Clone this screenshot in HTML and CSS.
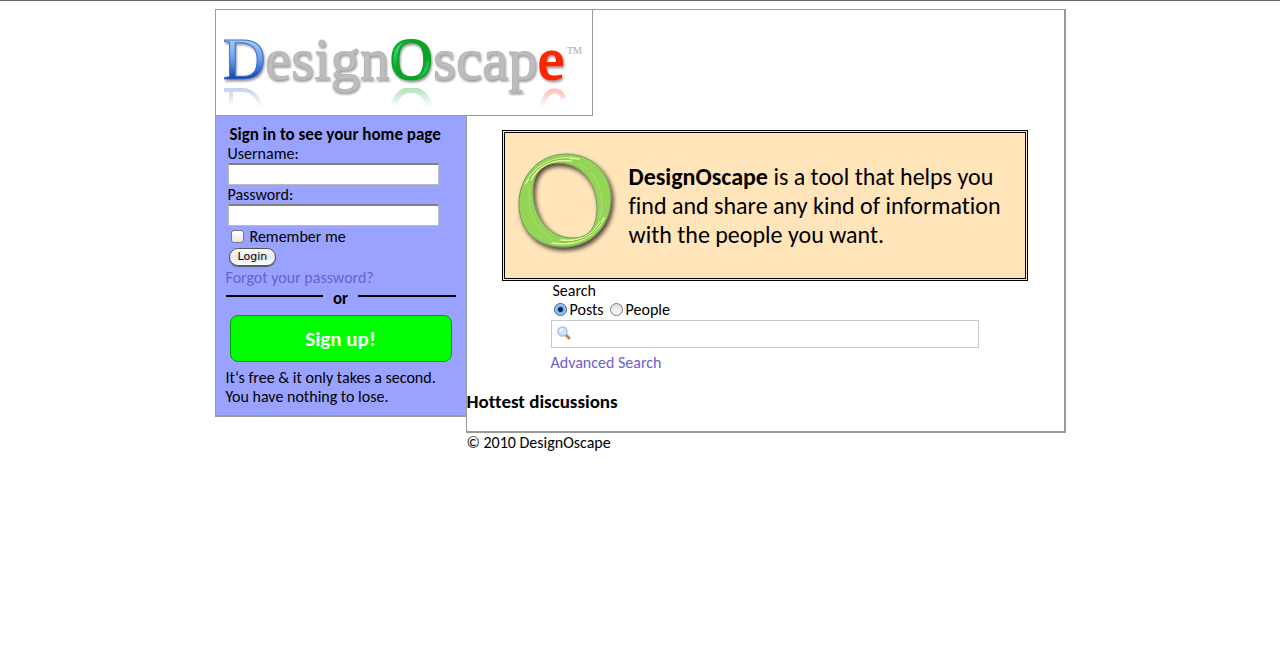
FILE: index.html
```html
<!DOCTYPE html>
<html lang="en">
<head>
<meta charset="utf-8">
<meta name="viewport" content="width=device-width, initial-scale=1">
<title>DesignOscape</title>
<link rel="stylesheet" href="styles.css">
</head>
<body>
<div class="page">
  <header class="header">
    <a class="logo" href="#">
      <svg width="376" height="105" viewBox="0 0 376 105" role="img" aria-label="DesignOscape">
        <defs>
          <linearGradient id="blue" x1="0" y1="0" x2="0" y2="1">
            <stop offset="0.2" stop-color="#a9cdfc"/><stop offset="0.5" stop-color="#6b9ff0"/><stop offset="0.8" stop-color="#0b43a4"/>
          </linearGradient>
          <linearGradient id="green" x1="0" y1="0" x2="1" y2="1">
            <stop offset="0.25" stop-color="#2fd663"/><stop offset="0.4" stop-color="#0aa320"/><stop offset="0.68" stop-color="#0aa320"/><stop offset="0.8" stop-color="#2be07a"/>
          </linearGradient>
          <linearGradient id="fade" gradientUnits="userSpaceOnUse" x1="0" y1="76" x2="0" y2="97">
            <stop offset="0" stop-color="#fff" stop-opacity="0.36"/><stop offset="1" stop-color="#fff" stop-opacity="0"/>
          </linearGradient>
          <mask id="reflection" maskUnits="userSpaceOnUse" x="0" y="76" width="376" height="24">
            <rect x="0" y="76" width="376" height="24" fill="url(#fade)"/>
          </mask>
          <filter id="emboss" x="-5%" y="-10%" width="110%" height="125%">
            <feDropShadow dx="1" dy="2" stdDeviation="1" flood-color="#555" flood-opacity="0.6"/>
          </filter>
          <filter id="soft"><feGaussianBlur stdDeviation="0.6"/></filter>
        </defs>
        <g class="wordmark" filter="url(#emboss)">
          <text x="7" y="69" fill="url(#blue)" stroke="#3c70c8" stroke-width="1">D</text>
          <text x="49" y="69" fill="#bdbdbd" stroke="#b5b5b5" stroke-width="1">esign</text>
          <text x="174" y="69" fill="url(#green)" stroke="#0aa32c" stroke-width="2">O</text>
          <text x="217" y="69" fill="#bdbdbd" stroke="#b5b5b5" stroke-width="1">scap</text>
          <text x="322" y="69" fill="#fa2800" stroke="#fa2800" stroke-width="2">e</text>
        </g>
        <text class="trademark" x="351" y="44">TM</text>
        <g mask="url(#reflection)" fill="none" stroke-width="4" aria-hidden="true">
          <g filter="url(#soft)">
            <path d="M8 80H26C36 80 42 86 45 98M15 80V98" stroke="#3c70c8"/>
            <path d="M177 98C180 85 187 80 195 80C204 80 211 86 214 98" stroke="#0aa32c" stroke-width="6"/>
            <path d="M326 98C328 86 333 81 339 81C343 81 346 84 348 88" stroke="#fa2800" stroke-width="5"/>
          </g>
        </g>
      </svg>
    </a>
  </header>

  <aside class="sidebar">
    <form class="signin">
      <h2 class="signin-title">Sign in to see your home page</h2>
      <label for="username">Username:</label>
      <input class="field" id="username" type="text">
      <label for="password">Password:</label>
      <input class="field" id="password" type="password">
      <div class="remember">
        <input class="check" id="remember" type="checkbox">
        <label for="remember">Remember me</label>
      </div>
      <button class="login" type="submit">Login</button>
    </form>
    <a class="link forgot" href="#">Forgot your password?</a>
    <div class="divider">or</div>
    <button class="signup" type="button">Sign up!</button>
    <p class="note">It‘s free &amp; it only takes a second.<br>You have nothing to lose.</p>
  </aside>

  <main class="main">
    <section class="banner">
      <svg class="ring" width="104" height="104" viewBox="0 0 104 104" aria-hidden="true">
        <defs>
          <filter id="ringShadow" x="-10%" y="-10%" width="125%" height="125%">
            <feDropShadow dx="2" dy="3" stdDeviation="2" flood-color="#201008" flood-opacity="0.8"/>
          </filter>
        </defs>
        <path d="M49 2C74 2 94 20 94 46C94 74 74 95 46 95C20 95 2 78 2 52C2 24 22 2 49 2ZM41 11C24 11 16 22 16 40C16 65 32 86 56 86C73 86 80 74 80 56C80 31 65 11 41 11Z" fill="#94d554" fill-rule="evenodd" stroke="#719866" stroke-width="1" filter="url(#ringShadow)"/>
        <path d="M9 31C20 10 41 3 62 7M14 28C23 12 38 7 54 9M87 66C77 87 57 94 35 91M83 70C75 85 60 90 44 88" fill="none" stroke="#e2fb98" stroke-width="1.5" stroke-linecap="round"/>
        <path d="M12 27C21 13 36 6 52 7M84 70C75 85 61 91 44 90" fill="none" stroke="#6fb53a" stroke-width="1"/>
        <path d="M63 12C80 22 89 42 83 66M13 34C9 55 16 75 35 87" fill="none" stroke="#a9e070" stroke-width="1"/>
      </svg>
      <p class="pitch"><strong>DesignOscape</strong> is a tool that helps you find and share any kind of information with the people you want.</p>
    </section>

    <form class="search" role="search">
      <label class="search-label" for="query">Search</label>
      <div class="scope">
        <input class="radio" id="posts" name="scope" type="radio" checked>
        <label for="posts">Posts</label>
        <input class="radio" id="people" name="scope" type="radio">
        <label for="people">People</label>
      </div>
      <div class="search-box">
        <svg width="14" height="14" viewBox="0 0 14 14" aria-hidden="true">
          <path d="M9 9L12 12" stroke="#b98550" stroke-width="3" stroke-linecap="round"/>
          <circle cx="5.5" cy="5.5" r="4.5" fill="#cbe6fa" stroke="#a5c4e4" stroke-width="1.5"/>
          <path d="M3 6C3 4 4 3 6 3" fill="none" stroke="#f1faff" stroke-width="1.5"/>
        </svg>
        <input class="query" id="query" type="text">
      </div>
      <a class="link" href="#">Advanced Search</a>
    </form>

    <h2 class="hottest">Hottest discussions</h2>
  </main>

  <footer class="footer">© 2010 DesignOscape</footer>
</div>
</body>
</html>
```
FILE: styles.css
```css
* { box-sizing: border-box; }

body {
  margin: 0;
  border-top: 1px solid #666;
  background: #fff;
  color: #000;
  font-family: Calibri, Carlito, Lato, sans-serif;
  font-size: 16px;
  font-variant-ligatures: none;
  line-height: 19px;
}

h2, p { margin: 0; }

.page {
  display: grid;
  grid-template-columns: 251px 1fr;
  align-items: start;
  max-width: 851px;
  margin: 8px auto;
}

.header {
  grid-column: 1 / -1;
  display: flex;
  border: solid #999;
  border-width: 1px 2px 0 1px;
}

.logo {
  display: block;
  border: solid #999;
  border-width: 0 1px 1px 0;
}

.logo svg { display: block; }

.wordmark {
  font-family: "Liberation Serif", serif;
  font-size: 59px;
}

.trademark {
  font-family: "Liberation Serif", serif;
  font-size: 10px;
  fill: #aaa;
}

.sidebar {
  display: flex;
  flex-direction: column;
  padding: 9px 10px;
  border: solid #999;
  border-width: 0 0 2px 1px;
  background: #99a3ff;
}

.signin {
  display: flex;
  flex-direction: column;
  align-items: flex-start;
  padding: 0 2px;
}

.signin-title {
  padding-left: 2px;
  font-size: 17px;
  line-height: 19px;
}

.field {
  width: 100%;
  max-width: 211px;
  height: 22px;
  padding: 2px;
  border: 1px solid #bbb;
  border-top: 2px solid #808080;
  background: #fff;
}

.remember {
  display: flex;
  align-items: center;
  gap: 6px;
  padding: 1px 3px;
}

.check {
  appearance: none;
  width: 13px;
  height: 13px;
  margin: 0;
  border: 1px solid #777;
  border-radius: 3px;
  background: linear-gradient(#fff, #e8e8e8);
}

.login {
  height: 18px;
  margin: 1px 1px 2px;
  padding: 0 8px;
  border: 1px solid #555;
  border-radius: 10px;
  background: linear-gradient(#fff, #e8e8e8 50%, #fff);
  box-shadow: 0 1px 1px #556;
  font: 11px/16px "DejaVu Sans", sans-serif;
}

.link {
  color: #6a5fd3;
  text-decoration: none;
}

.divider {
  display: flex;
  align-items: center;
  gap: 10px;
  margin: 2px 0 6px;
  font-size: 17px;
  font-weight: bold;
  line-height: 20px;
}

.divider::before,
.divider::after {
  content: "";
  flex: 1;
  height: 2px;
  margin-bottom: 6px;
  background: #000;
}

.signup {
  height: 47px;
  margin: 0 4px 6px;
  border: 1px solid #00a000;
  border-radius: 8px;
  background: #0f0;
  color: #fff;
  font-family: inherit;
  font-size: 21px;
  font-weight: bold;
}

.main {
  padding: 14px 36px 0 0;
  border: solid #999;
  border-width: 0 2px 2px 1px;
}

.banner {
  display: flex;
  gap: 8px;
  margin-left: 35px;
  padding: 19px 12px 22px 12px;
  border: 3px double #000;
  background: #ffe5b9;
}

.ring { flex: none; }

.pitch {
  padding-top: 10px;
  font-size: 24px;
  line-height: 29px;
}

.search {
  margin: 0 49px 0 84px;
}

.search-label {
  display: block;
  padding-left: 2px;
}

.scope {
  display: flex;
  align-items: center;
  gap: 3px;
  padding-left: 3px;
}

.radio {
  appearance: none;
  width: 13px;
  height: 13px;
  margin: 0;
  border: 1px solid #777;
  border-radius: 50%;
  background: linear-gradient(#ddd, #fff);
}

.radio:checked {
  border-color: #34548c;
  background: radial-gradient(circle, #102040 0 2px, #6caaf0 3px, #b5e0ff 6px);
}

.scope label + .radio { margin-left: 3px; }

.search-box {
  display: flex;
  align-items: flex-start;
  gap: 4px;
  height: 28px;
  margin: 1px 0 5px;
  padding: 5px;
  border: 1px solid #c8c8c8;
}

.query {
  flex: 1;
  min-width: 0;
  height: 16px;
  padding: 0;
  border: 0;
  outline: 0;
}

.hottest {
  margin: 19px 0;
  font-size: 19px;
  line-height: 21px;
}

.footer {
  grid-column: 2;
  padding-left: 1px;
}
```
